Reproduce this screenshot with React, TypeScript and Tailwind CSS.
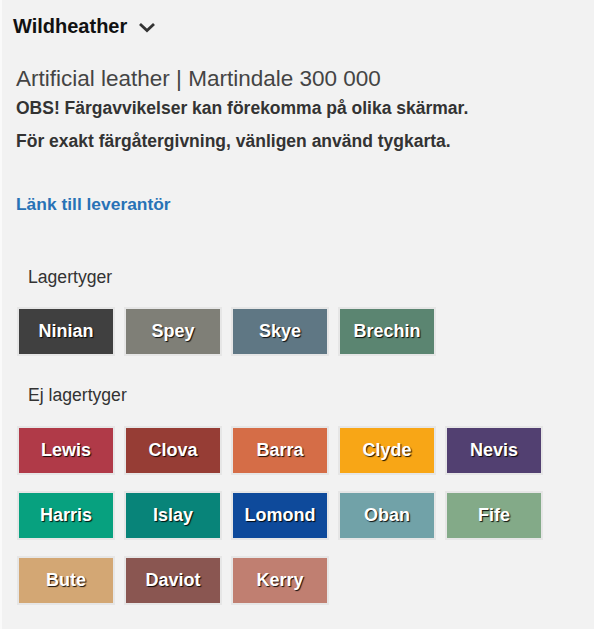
const inStock = [
  { name: "Ninian", color: "bg-[#404040]" },
  { name: "Spey", color: "bg-[#7f7f77]" },
  { name: "Skye", color: "bg-[#5f7784]" },
  { name: "Brechin", color: "bg-[#5b8571]" },
];

const notInStock = [
  { name: "Lewis", color: "bg-[#b03a48]" },
  { name: "Clova", color: "bg-[#963d35]" },
  { name: "Barra", color: "bg-[#d56d47]" },
  { name: "Clyde", color: "bg-[#f8a616]" },
  { name: "Nevis", color: "bg-[#524071]" },
  { name: "Harris", color: "bg-[#07a17f]" },
  { name: "Islay", color: "bg-[#088479]" },
  { name: "Lomond", color: "bg-[#0e4a9b]" },
  { name: "Oban", color: "bg-[#71a2a8]" },
  { name: "Fife", color: "bg-[#83aa88]" },
  { name: "Bute", color: "bg-[#d3a774]" },
  { name: "Daviot", color: "bg-[#8a5651]" },
  { name: "Kerry", color: "bg-[#c07f71]" },
];

function Swatch({ name, color }: { name: string; color: string }) {
  return (
    <button
      className={`${color} flex h-[49px] w-[98px] items-center justify-center border-2 border-[#e6e6e6] text-[18px] font-bold text-white [text-shadow:1px_1px_1px_rgba(0,0,0,0.9)]`}
    >
      {name}
    </button>
  );
}

export default function App() {
  return (
    <div className="min-h-[629px] w-full border-l-2 border-[#fafafa] bg-[#f2f2f2] font-['Liberation_Sans',Arial,sans-serif] text-[#333]">
      <div className="flex items-center gap-[11px] pl-[11px] pt-[14px]">
        <h2 className="text-[20px] font-bold leading-6 text-[#111]">Wildheather</h2>
        <svg width="18" height="12" viewBox="0 0 18 12" className="mt-[1px]">
          <polyline points="2,3 9,9.5 16,3" fill="none" stroke="#333" strokeWidth="2.8" />
        </svg>
      </div>

      <div className="pl-[14px] pt-[28px]">
        <p className="text-[22.5px] leading-[26px] text-[#444]">Artificial leather | Martindale 300 000</p>
        <p className="mt-[5px] text-[17.5px] font-bold leading-[22px]">
          OBS! Färgavvikelser kan förekomma på olika skärmar.
        </p>
        <p className="mt-[11px] text-[17.5px] font-bold leading-[22px]">
          För exakt färgåtergivning, vänligen använd tygkarta.
        </p>
        <a className="mt-[41px] block text-[17.4px] font-bold leading-[22px] text-[#2872b6]" href="#">
          Länk till leverantör
        </a>
      </div>

      <div className="pl-[15px] pt-[52px]">
        <h3 className="pl-[11px] text-[17.6px] leading-5">Lagertyger</h3>
        <div className="mt-[20px] flex gap-[9px]">
          {inStock.map((s) => (
            <Swatch key={s.name} {...s} />
          ))}
        </div>

        <h3 className="mt-[29px] pl-[11px] text-[17.6px] leading-5">Ej lagertyger</h3>
        <div className="mt-[21px] flex w-[540px] flex-wrap gap-x-[9px] gap-y-[16px]">
          {notInStock.map((s) => (
            <Swatch key={s.name} {...s} />
          ))}
        </div>
      </div>
    </div>
  );
}
